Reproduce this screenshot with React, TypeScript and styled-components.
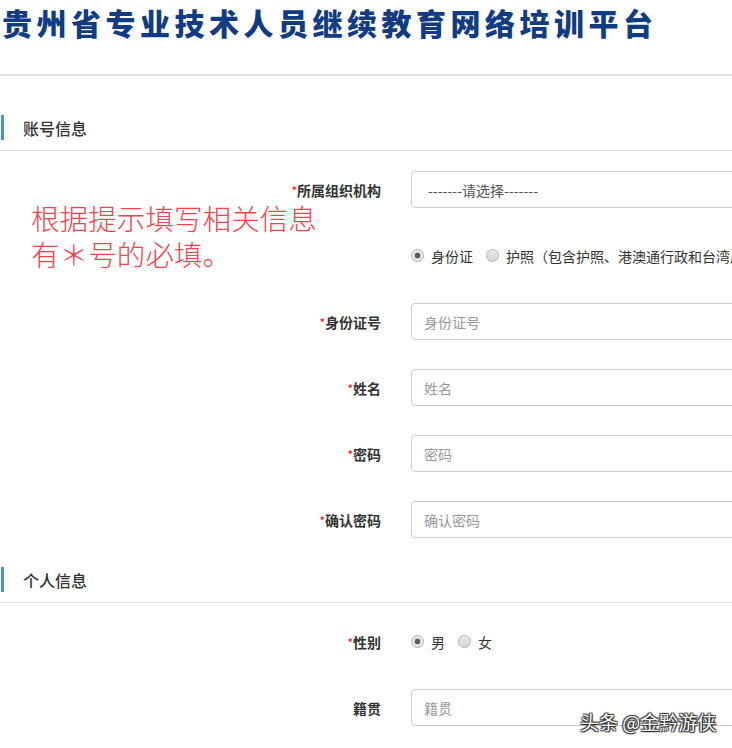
import React, { FC } from "react";
import styled, { createGlobalStyle } from "styled-components";

const GlobalStyle = createGlobalStyle`
  body {
    margin: 0;
    background: #fff;
    font-family: "Noto Sans CJK SC", "Noto Sans", sans-serif;
    color: #333;
    overflow: hidden;
  }
`;

const Page = styled.div`
  position: relative;
  width: 732px;
  height: 748px;
  overflow: hidden;
`;

const Header = styled.header`
  height: 76px;
  box-sizing: border-box;
  padding: 4px 0 0 2px;
  border-bottom: 2px solid #e0e0e0;
`;

const Title = styled.h1`
  margin: 0;
  font-size: 30px;
  line-height: 36px;
  font-weight: 900;
  letter-spacing: 4.5px;
  color: #113b83;
  white-space: nowrap;
`;

const Section = styled.section<{ $top: number }>`
  margin-top: ${(p) => p.$top}px;
`;

const SectionBar = styled.div`
  padding-bottom: 10px;
  border-bottom: 1px solid #e3e3e3;
`;

const SectionTitle = styled.h2`
  margin: 0 0 0 1px;
  height: 25px;
  display: flex;
  align-items: center;
  padding-left: 19px;
  border-left: 3px solid #4a8fe0;
  font-size: 16px;
  font-weight: 500;
  color: #333;
`;

const Form = styled.div`
  padding-top: 20px;
  display: flex;
  flex-direction: column;
  gap: 29px;
`;

const Row = styled.div`
  display: flex;
  align-items: center;
  min-height: 37px;
`;

const Label = styled.label`
  width: 381px;
  flex-shrink: 0;
  margin-right: 30px;
  text-align: right;
  font-size: 14px;
  font-weight: 700;
  color: #333;
`;

const Star = styled.span`
  color: #f00;
  font-weight: 400;
  font-size: 12px;
`;

const Input = styled.input`
  width: 430px;
  height: 37px;
  flex-shrink: 0;
  box-sizing: border-box;
  border: 1px solid #ccc;
  border-radius: 4px;
  padding: 0 12px;
  font-family: inherit;
  font-size: 14px;
  color: #555;
  outline: none;
  &::placeholder {
    color: #999;
  }
`;

const Select = styled.select`
  width: 430px;
  height: 37px;
  flex-shrink: 0;
  box-sizing: border-box;
  border: 1px solid #ccc;
  border-radius: 4px;
  padding: 0 16px;
  appearance: none;
  background: #fff;
  font-family: inherit;
  font-size: 14px;
  color: #555;
`;

const Options = styled.div`
  display: flex;
  align-items: center;
  gap: 13px;
  white-space: nowrap;
  font-size: 14px;
  color: #333;
`;

const Option = styled.span`
  display: flex;
  align-items: center;
  gap: 7px;
`;

const Dot = styled.span<{ $on?: boolean }>`
  width: 13px;
  height: 13px;
  box-sizing: border-box;
  border-radius: 50%;
  border: 1px solid #b4b4b4;
  background: ${(p) =>
    p.$on
      ? "radial-gradient(circle, #5a5a5a 0 2.6px, #e6e6e6 3.2px)"
      : "linear-gradient(#ececec, #d6d6d6)"};
`;

const Note = styled.div`
  position: absolute;
  left: 31px;
  top: 200px;
  font-size: 28.6px;
  line-height: 36px;
  font-weight: 300;
  color: #f4434c;
  white-space: nowrap;
`;

const NoteLine = styled.p`
  margin: 0;
`;

const Watermark = styled.div`
  position: absolute;
  left: 580px;
  top: 709px;
  font-size: 19px;
  line-height: 26px;
  color: #fff;
  white-space: nowrap;
  text-shadow: 0 0 1px #222, 1px 1px 1px #222, -1px -1px 1px #444, 1px -1px 1px #444,
    -1px 1px 1px #444;
`;

const Field: FC<{ label: string; required?: boolean; children: React.ReactNode }> = ({
  label,
  required,
  children,
}) => (
  <Row>
    <Label>
      {required && <Star>*</Star>}
      {label}
    </Label>
    {children}
  </Row>
);

const App: FC = () => {
  return (
    <Page>
      <GlobalStyle />
      <Header>
        <Title>贵州省专业技术人员继续教育网络培训平台</Title>
      </Header>

      <Section $top={39}>
        <SectionBar>
          <SectionTitle>账号信息</SectionTitle>
        </SectionBar>
        <Form>
          <Field label="所属组织机构" required>
            <Select defaultValue="">
              <option value="">-------请选择-------</option>
            </Select>
          </Field>
          <Field label="">
            <Options>
              <Option>
                <Dot $on />
                身份证
              </Option>
              <Option>
                <Dot />
                护照（包含护照、港澳通行政和台湾居民来往大陆通行证）
              </Option>
            </Options>
          </Field>
          <Field label="身份证号" required>
            <Input placeholder="身份证号" />
          </Field>
          <Field label="姓名" required>
            <Input placeholder="姓名" />
          </Field>
          <Field label="密码" required>
            <Input placeholder="密码" type="password" />
          </Field>
          <Field label="确认密码" required>
            <Input placeholder="确认密码" type="password" />
          </Field>
        </Form>
      </Section>

      <Section $top={29}>
        <SectionBar>
          <SectionTitle>个人信息</SectionTitle>
        </SectionBar>
        <Form>
          <Field label="性别" required>
            <Options>
              <Option>
                <Dot $on />男
              </Option>
              <Option>
                <Dot />女
              </Option>
            </Options>
          </Field>
          <Field label="籍贯">
            <Input placeholder="籍贯" />
          </Field>
        </Form>
      </Section>

      <Note>
        <NoteLine>根据提示填写相关信息</NoteLine>
        <NoteLine>有＊号的必填。</NoteLine>
      </Note>
      <Watermark>头条 @金黔游侠</Watermark>
    </Page>
  );
};

export default App;
